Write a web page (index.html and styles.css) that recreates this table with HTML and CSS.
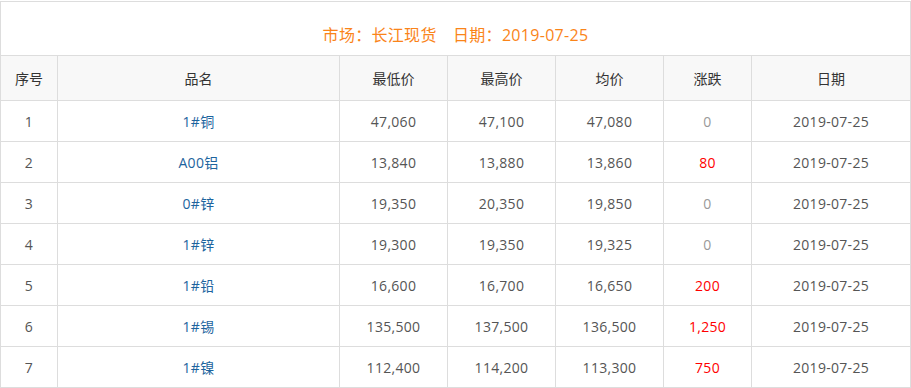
FILE: index.html
```html
<!DOCTYPE html>
<html lang="zh-CN">
<head>
<meta charset="utf-8">
<title>长江现货</title>
<link rel="stylesheet" href="styles.css">
</head>
<body>
<div class="panel">
  <div class="title">市场：长江现货　日期：2019-07-25</div>
  <table class="prices">
    <colgroup>
      <col class="c-no"><col class="c-name"><col class="c-p"><col class="c-p"><col class="c-p"><col class="c-chg"><col class="c-date">
    </colgroup>
    <thead>
      <tr><th>序号</th><th>品名</th><th>最低价</th><th>最高价</th><th>均价</th><th>涨跌</th><th>日期</th></tr>
    </thead>
    <tbody>
      <tr><td>1</td><td class="name">1#铜</td><td>47,060</td><td>47,100</td><td>47,080</td><td class="flat">0</td><td>2019-07-25</td></tr>
      <tr><td>2</td><td class="name">A00铝</td><td>13,840</td><td>13,880</td><td>13,860</td><td class="up">80</td><td>2019-07-25</td></tr>
      <tr><td>3</td><td class="name">0#锌</td><td>19,350</td><td>20,350</td><td>19,850</td><td class="flat">0</td><td>2019-07-25</td></tr>
      <tr><td>4</td><td class="name">1#锌</td><td>19,300</td><td>19,350</td><td>19,325</td><td class="flat">0</td><td>2019-07-25</td></tr>
      <tr><td>5</td><td class="name">1#铅</td><td>16,600</td><td>16,700</td><td>16,650</td><td class="up">200</td><td>2019-07-25</td></tr>
      <tr><td>6</td><td class="name">1#锡</td><td>135,500</td><td>137,500</td><td>136,500</td><td class="up">1,250</td><td>2019-07-25</td></tr>
      <tr><td>7</td><td class="name">1#镍</td><td>112,400</td><td>114,200</td><td>113,300</td><td class="up">750</td><td>2019-07-25</td></tr>
    </tbody>
  </table>
</div>
</body>
</html>
```
FILE: styles.css
```css
html, body {
  margin: 0;
  padding: 0;
  background: #fff;
}
body {
  font-family: "Open Sans", "Noto Sans CJK SC", sans-serif;
  font-size: 14px;
  color: #555;
  padding-top: 1px;
}
.panel {
  width: 911px;
  box-sizing: border-box;
  border-top: 1px solid #ddd;
}
.title {
  border-left: 1px solid #ddd;
  border-right: 1px solid #ddd;
  padding: 18px 0 5px;
  line-height: 30px;
  text-align: center;
  font-family: "Open Sans", "Noto Sans CJK TC", sans-serif;
  font-size: 16px;
  letter-spacing: 0.3px;
  color: #fa8419;
}
.prices {
  table-layout: fixed;
  border-collapse: separate;
  border-spacing: 0;
  width: 911px;
  border-top: 1px solid #ddd;
  border-left: 1px solid #ddd;
}
.c-no { width: 57px; }
.c-name { width: 282px; }
.c-p { width: 108px; }
.c-chg { width: 88px; }
.c-date { width: 159px; }
.prices th, .prices td {
  box-sizing: border-box;
  border-right: 1px solid #ddd;
  border-bottom: 1px solid #ddd;
  text-align: center;
  vertical-align: middle;
  padding: 0;
  font-weight: normal;
}
.prices th {
  height: 45px;
  background: #f8f8f8;
  color: #333;
}
.prices td {
  height: 41px;
  letter-spacing: 0.3px;
}
.prices td.name { color: #1d649e; }
.prices td.up { color: #f00; }
.prices td.flat { color: #999; }
```
